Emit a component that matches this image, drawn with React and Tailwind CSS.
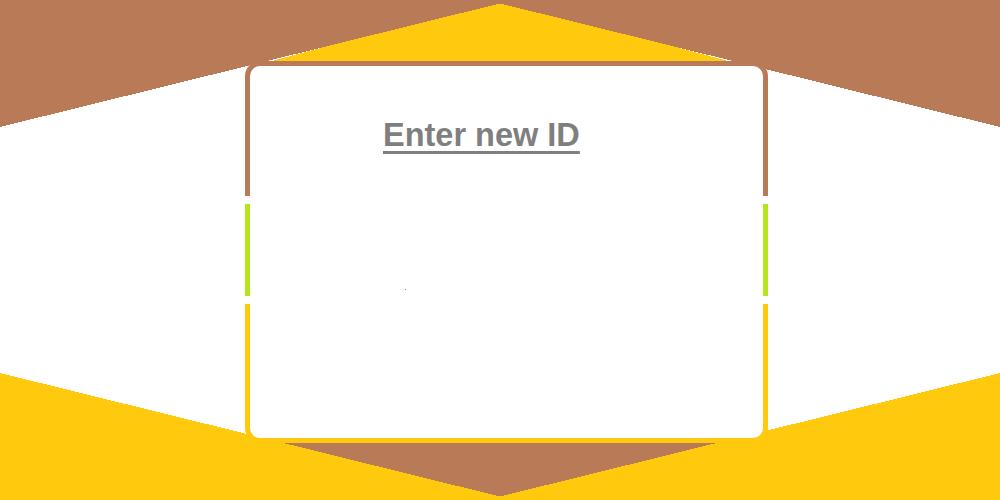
import React from "react";

export default function App() {
  return (
    <div className="relative w-[1000px] h-[500px] overflow-hidden bg-white" style={{ fontFamily: '"Liberation Sans", Arial, sans-serif' }}>
      <svg className="absolute inset-0" width="1000" height="500" viewBox="0 0 1000 500" shapeRendering="crispEdges">
        <polygon points="270,61.5 500,0 730,61.5" fill="#ffc90e" />
        <polygon points="0,0 1000,0 1000,127 500,3.5 0,127" fill="#b97a57" />
        <polygon points="278,442 500,500 722,442" fill="#b97a57" />
        <polygon points="0,373 500,496.5 1000,373 1000,500 0,500" fill="#ffc90e" />
      </svg>
      <div className="relative pt-[61px] pl-[245px]">
        <div className="w-[523px] h-[382px] rounded-[15px] p-[5px] bg-[linear-gradient(to_bottom,#b97a57_0px,#b97a57_135px,#ffffff_135px,#ffffff_143px,#b5e61d_143px,#b5e61d_235px,#ffffff_235px,#ffffff_243px,#ffc90e_243px,#ffc90e_100%)]">
          <div className="h-full bg-white rounded-[10px] pt-[53px] pl-[133px]">
            <h1 className="text-[32.5px] leading-none font-bold text-[#7f7f7f] underline decoration-[3px] underline-offset-[5px]">
              Enter new ID
            </h1>
            <div className="mt-[137px] ml-[22px] w-px h-px bg-[#8a8a8a]" />
          </div>
        </div>
      </div>
    </div>
  );
}
